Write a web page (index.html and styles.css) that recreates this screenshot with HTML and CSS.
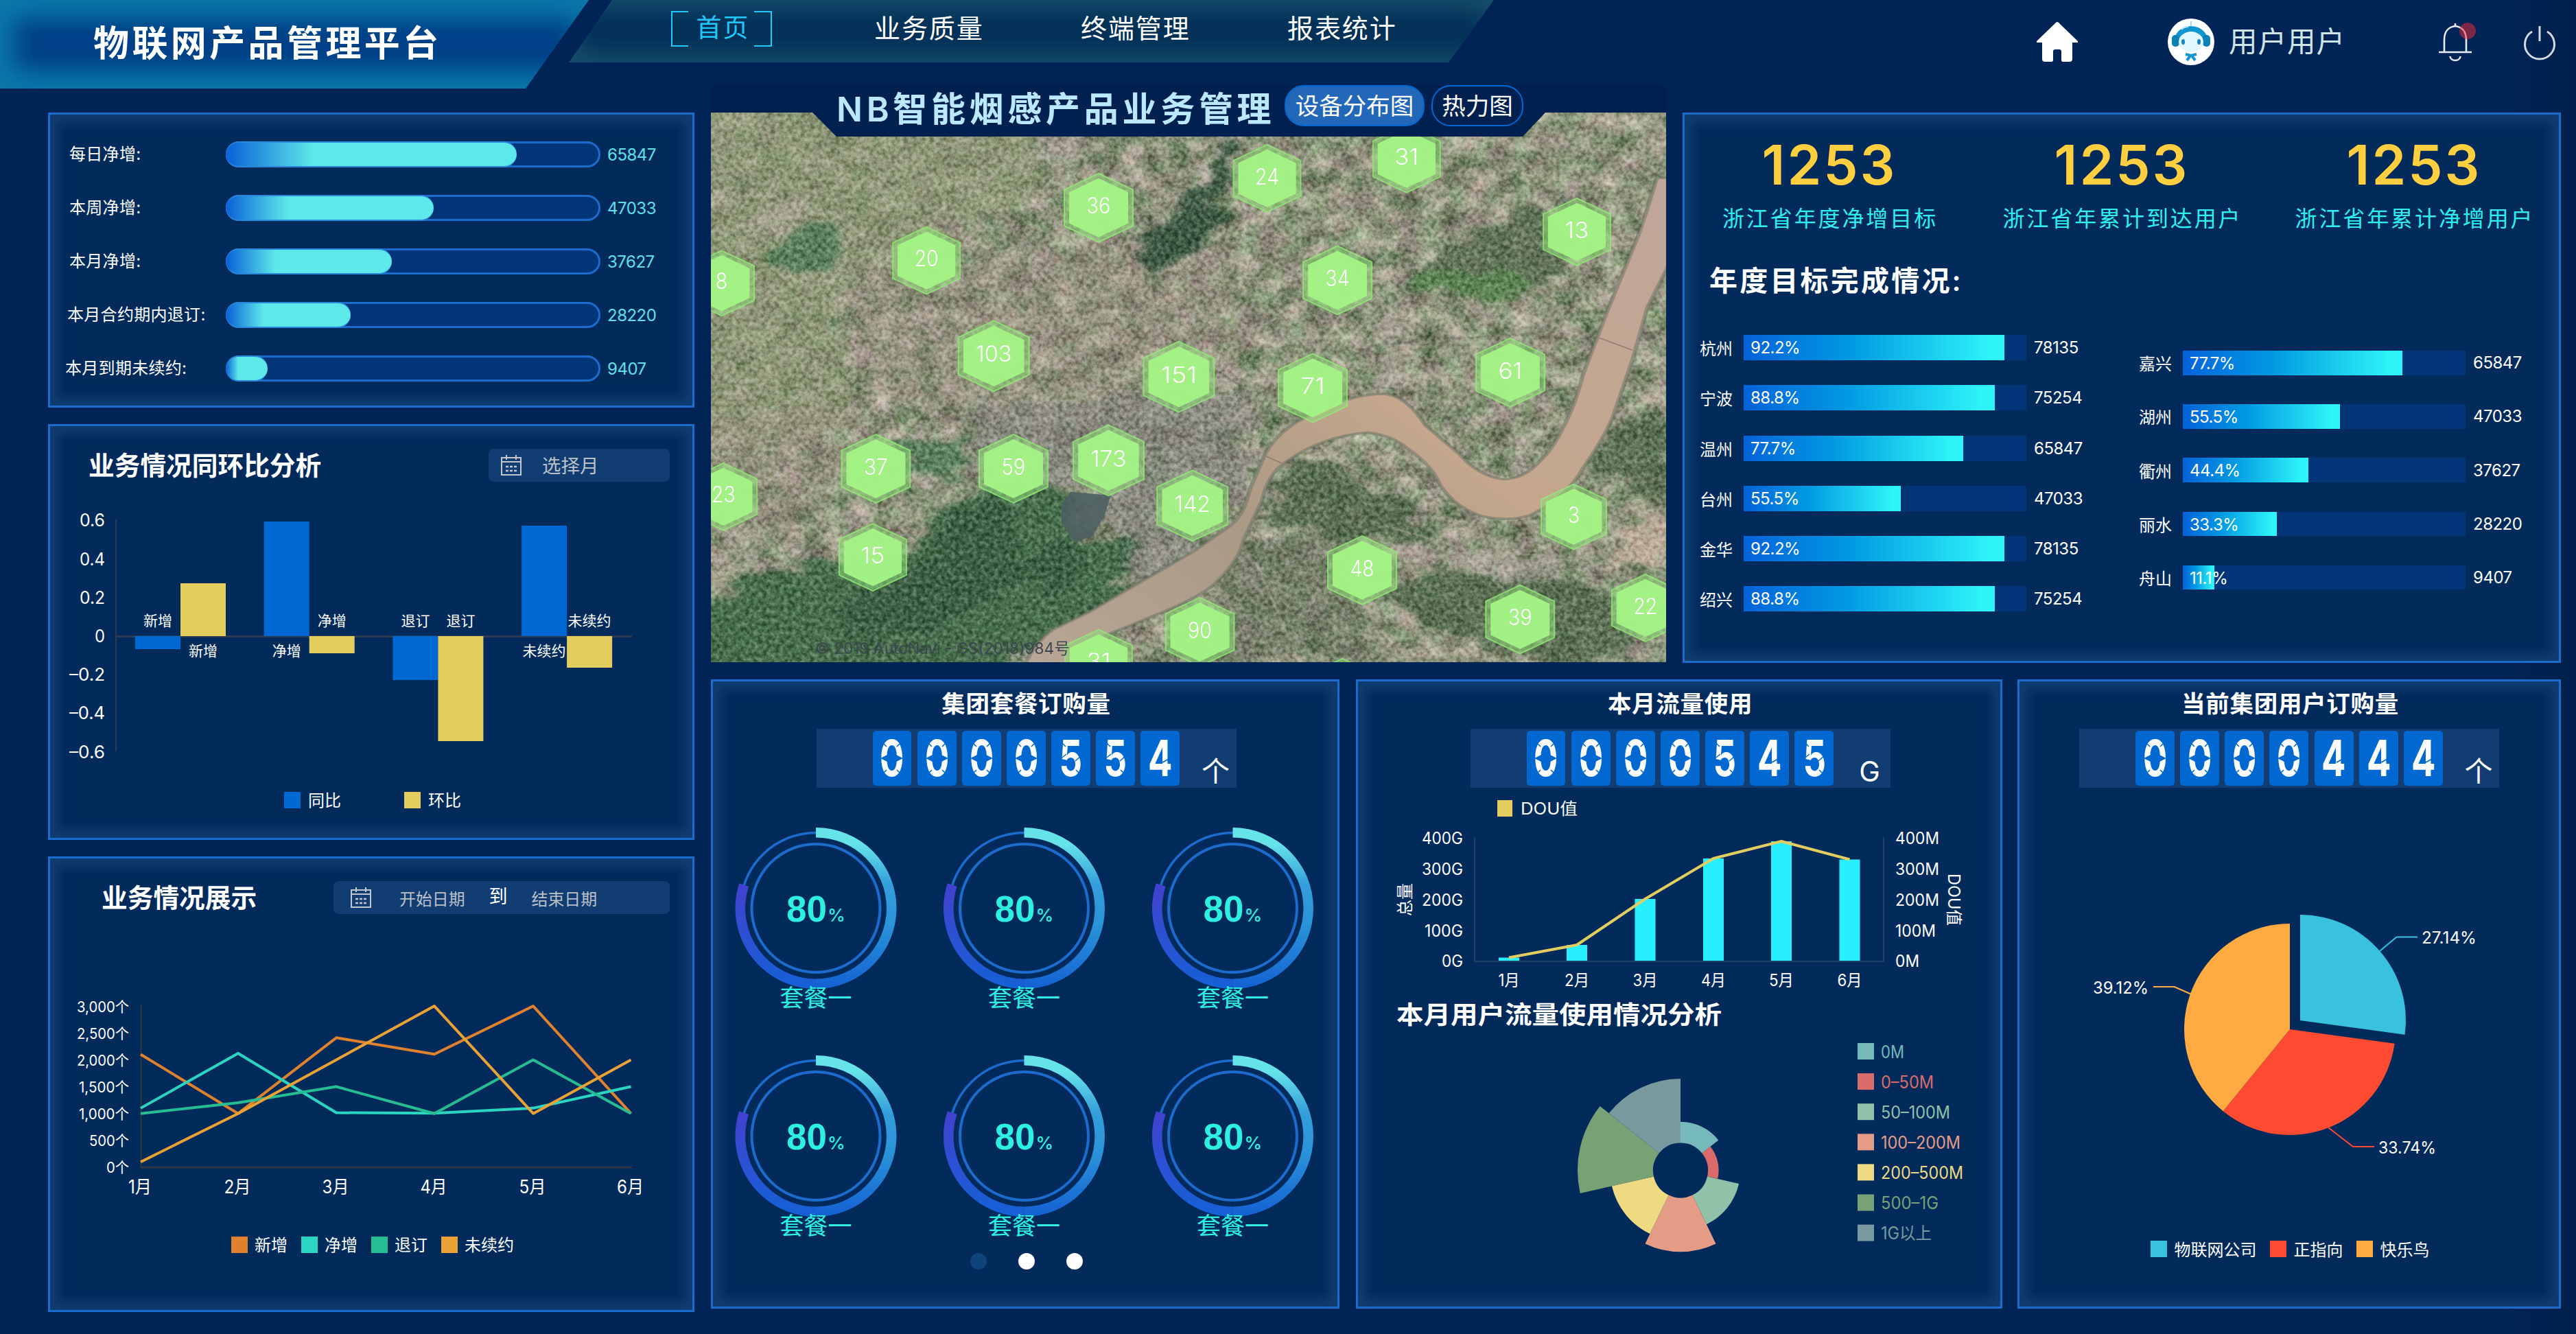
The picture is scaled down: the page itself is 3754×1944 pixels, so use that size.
FILE: index.html
```html
<!DOCTYPE html>
<html lang="zh-CN">
<head>
<meta charset="utf-8">
<title>物联网产品管理平台</title>
<link rel="stylesheet" href="styles.css">
</head>
<body>
<header class="header">
  <div class="brand"><h1>物联网产品管理平台</h1></div>
  <nav class="nav">
    <a class="nav-item active">首页</a>
    <a class="nav-item">业务质量</a>
    <a class="nav-item">终端管理</a>
    <a class="nav-item">报表统计</a>
  </nav>
  <div class="tools">
    <svg class="home" viewBox="0 0 60 58"><path fill="#fff" d="M30 0Q32 0 34 3L60 28V30H52V54Q52 58 48 58H38Q36 58 36 55V43Q36 40 33 40H27Q24 40 24 43V55Q24 58 22 58H12Q8 58 8 54V30H0V28L26 3Q28 0 30 0Z"/></svg>
    <svg class="avatar" viewBox="0 0 68 68">
      <circle cx="34" cy="34" r="34" fill="#fff"/>
      <path d="M34 4V12" stroke="#9fdcf3" stroke-width="2"/>
      <path d="M10 33C10 4 58 4 58 33" fill="#0f96cf"/>
      <rect x="6" y="24" width="11" height="17" rx="5" fill="#0c7fb9"/><rect x="51" y="24" width="11" height="17" rx="5" fill="#0c7fb9"/>
      <ellipse cx="34" cy="34" rx="18" ry="15" fill="#e2f8ff"/>
      <ellipse cx="22.500" cy="34" rx="2.500" ry="4" fill="#1484c0"/><ellipse cx="45.500" cy="34" rx="2.500" ry="4" fill="#1484c0"/>
      <path d="M20 16Q24 12 30 12" stroke="#b6ecff" stroke-width="2" fill="none"/>
      <path d="M26 52L34 54L42 52M33 54L28 61M35 54L40 61" stroke="#1296cc" stroke-width="4" fill="none"/>
    </svg>
    <span class="user">用户用户</span>
    <svg class="bell" viewBox="0 0 56 62">
      <path d="M8 48V30C8 17 15 11 24 10C33 11 40 17 40 30V48M0 48H48M24 6V11M16.500 54C17 62 31 62 31.500 54" fill="none" stroke="#e8edf5" stroke-width="2.600"/>
      <circle cx="42" cy="17" r="12" fill="#f52a33" fill-opacity=".5"/>
    </svg>
    <svg class="power" viewBox="0 0 48 48"><path d="M13 9A21.500 21.500 0 1 0 35 9M24 1V23" fill="none" stroke="#d5dbe6" stroke-width="3"/></svg>
  </div>
</header>

<main class="board">
  <div class="side">
    <section class="panel progress" id="progress"></section>
    <section class="panel">
      <div class="head"><h2>业务情况同环比分析</h2>
        <div class="picker month"><svg class="cal"><use href="#calendar"/></svg><span>选择月</span></div></div>
      <svg class="chart" id="compare" viewBox="73 720 936 501"></svg>
    </section>
    <section class="panel">
      <div class="head trend"><h2>业务情况展示</h2>
        <div class="picker range"><svg class="cal"><use href="#calendar"/></svg><span>开始日期</span><b>到</b><span>结束日期</span></div></div>
      <svg class="chart" id="trend" viewBox="73 1350 936 559"></svg>
    </section>
  </div>

  <div class="centre">
    <div class="row top">
      <section class="map">
        <svg class="terrain" viewBox="0 0 1392 801">
          <defs>
            <filter id="ground" x="0" y="0" width="100%" height="100%" color-interpolation-filters="sRGB">
              <feTurbulence type="fractalNoise" baseFrequency=".03 .035" numOctaves="7" seed="8"/>
              <feColorMatrix values=".5 .25 0 0 .185  .46 .02 0 0 .34  .46 .18 .04 0 .15  0 0 0 0 1"/>
            </filter>
            <filter id="grain" x="0" y="0" width="100%" height="100%" color-interpolation-filters="sRGB">
              <feTurbulence type="fractalNoise" baseFrequency=".16" numOctaves="3" seed="21"/>
              <feColorMatrix values="1.800 .1 0 0 -.45  1.800 0 0 0 -.4  1.800 0 .1 0 -.45  0 0 0 0 1"/>
            </filter>
            <filter id="rough" x="-10%" y="-10%" width="120%" height="120%" color-interpolation-filters="sRGB">
              <feTurbulence type="fractalNoise" baseFrequency=".018" numOctaves="5" seed="4"/>
              <feDisplacementMap in="SourceGraphic" scale="100" xChannelSelector="R" yChannelSelector="G"/>
              <feGaussianBlur stdDeviation="6"/>
            </filter>
            <linearGradient id="water" x1="1" y1="0" x2="0" y2="1">
              <stop offset="0" stop-color="#bfa69a"/><stop offset=".45" stop-color="#c4a78d"/><stop offset=".7" stop-color="#aa9985"/><stop offset="1" stop-color="#b8a796"/>
            </linearGradient>
          </defs>
          <rect width="1392" height="801" filter="url(#ground)"/>
          <svg viewBox="7 8 1548 1532" width="1392" height="801" preserveAspectRatio="none">
            <g filter="url(#rough)">
              <path fill="#909b74" opacity=".55" d="M0 0H540V250L380 330L220 520L230 900L0 960Z"/>
              <path fill="#a09287" opacity=".35" d="M240 450L640 380L860 420L850 780L560 860L240 800ZM0 850L230 830V1020L0 1280Z"/>
              <path fill="#84827f" opacity=".55" d="M430 820L880 800L870 1080L700 1360L640 1060L430 1000Z"/>
              <path fill="#406a48" opacity=".9" d="M380 1110L450 1060L560 1030L600 1190L700 1190L660 1390L560 1460L470 1560H-20V1370L180 1250L340 1230Z"/>
              <path fill="#2c4d38" opacity=".4" d="M400 1120L480 1090L520 1300L400 1420L260 1500L200 1400L360 1260ZM560 1200L620 1230L580 1380L500 1300Z"/>
              <path fill="#4d7a57" opacity=".8" d="M310 920L420 910V1010L320 1030ZM120 340L200 300L220 380L170 450L110 410Z"/>
              <path fill="#2f5039" opacity=".85" d="M845 60L850 220L800 400L715 450L695 380L780 250Z"/>
              <path fill="#536a4e" opacity=".75" d="M1210 380L1350 250L1400 430L1340 500L1140 520L1150 450Z"/>
              <path fill="#5a8a50" opacity=".7" d="M1150 450H1320V520H1160Z"/>
              <path fill="#4c6648" opacity=".75" d="M910 1080L980 960L1130 1100L1180 1190L1050 1200L930 1160ZM1480 850H1560V1080L1430 1020ZM1120 1300L1360 1270L1460 1360L1500 1540H1360L1200 1470L1110 1380Z"/>
              <path fill="#5d6b55" opacity=".5" d="M880 1200L1000 1170L1100 1540H700L850 1340Z"/>
              <path fill="#bcaea8" opacity=".5" d="M1120 1210L1400 1250L1390 1310L1130 1270ZM1080 550L1130 540L1120 780L1100 760ZM540 90L600 70L610 140L550 150ZM40 1210L110 1220L90 1290L40 1280ZM60 300L190 240L130 330L70 350Z"/>
              <path fill="#c5b19e" opacity=".8" d="M1560 1120L1480 1180L1470 1240L1560 1270Z"/>
            </g>
            <path fill="none" stroke="#777b6c" stroke-width="5" opacity=".5" d="M1070 660L1190 640L1350 625L1430 650M830 730L890 800L880 960M550 80V210M1000 30L880 400L1060 560M1060 770L1200 790L1280 970"/>
            <path fill="none" stroke="#b5aba0" stroke-width="5" opacity=".4" d="M340 320L470 180M0 950L200 900L240 800M880 620L1080 440M1100 1160L1240 1230L1430 1250M890 1260L960 1540M640 780L860 800L820 900"/>
          </svg>
          <rect width="1392" height="801" filter="url(#grain)" class="grain"/>
          <svg viewBox="7 8 1548 1532" width="1392" height="801" preserveAspectRatio="none">
            <path fill="#4c5f60" opacity=".9" d="M575 1100L590 1065L655 1075L645 1130L625 1190L595 1205L575 1150Z"/>
            <path fill="url(#water)" stroke="#6f7468" stroke-width="7" stroke-opacity=".55" d="M1575 190H1540Q1528 260 1510 350L1460 560L1420 740Q1408 820 1390 880Q1370 950 1350 980Q1325 1030 1290 1030Q1250 1020 1220 960L1165 880Q1135 800 1100 792Q1050 792 1000 835Q930 880 905 960Q895 1000 880 1060Q870 1140 840 1170L790 1230L700 1320L620 1400L560 1450Q530 1490 515 1550H590L640 1470L740 1400Q810 1350 830 1310Q865 1250 870 1200L900 1090Q910 1010 945 975Q1000 910 1070 900Q1110 905 1140 950Q1175 990 1190 1050Q1215 1110 1255 1132Q1300 1150 1335 1130Q1395 1080 1420 1000Q1460 900 1470 850L1500 700L1525 550L1575 380Z"/>
            <path fill="none" stroke="#8f8170" stroke-width="3" d="M1445 635L1500 670M905 965L945 995"/>
          </svg>
        </svg>
        <svg class="markers" id="markers" viewBox="1036 164 1392 801"></svg>
        <div class="map-bar">
          <h2>NB智能烟感产品业务管理</h2>
          <button class="pill on">设备分布图</button>
          <button class="pill">热力图</button>
        </div>
      </section>

      <section class="panel target">
        <div class="totals">
          <div><strong>1253</strong><span>浙江省年度净增目标</span></div>
          <div><strong>1253</strong><span>浙江省年累计到达用户</span></div>
          <div><strong>1253</strong><span>浙江省年累计净增用户</span></div>
        </div>
        <h3>年度目标完成情况:</h3>
        <div class="cities"><div class="city-col" id="cityA"></div><div class="city-col b" id="cityB"></div></div>
      </section>
    </div>

    <div class="row bottom">
      <section class="panel stat">
        <h2>集团套餐订购量</h2>
        <div class="counter" data-value="0000554" data-unit="个"></div>
        <svg class="chart" id="rings" viewBox="1039 1148 910 756"></svg>
      </section>
      <section class="panel stat">
        <h2>本月流量使用</h2>
        <div class="counter" data-value="0000545" data-unit="G"></div>
        <svg class="chart" id="flow" viewBox="1979 1148 936 756"></svg>
      </section>
      <section class="panel stat">
        <h2>当前集团用户订购量</h2>
        <div class="counter" data-value="0000444" data-unit="个"></div>
        <svg class="chart" id="pie" viewBox="2943 1148 786 756"></svg>
      </section>
    </div>
  </div>
</main>

<svg width="0" height="0" class="defs">
  <symbol id="calendar" viewBox="0 0 30 30"><path d="M1 4H29V29H1ZM1 10H29M8 0V7M22 0V7" fill="none" stroke="#c3c7cd" stroke-width="2"/><path d="M7 17H11M13 17H17M19 17H23M7 23H11M13 23H17M19 23H23" stroke="#c3c7cd" stroke-width="2.500"/></symbol>
</svg>
<script src="app.js"></script>
</body>
</html>
```
FILE: styles.css
```css
* { box-sizing: border-box; }
body {
  margin: 0; width: 3754px; height: 1944px; overflow: hidden; color: #fff;
  background: linear-gradient(90deg, #002456 0, #002456 3650px, #00204a 3754px);
  font-family: Inter, "Noto Sans CJK SC", sans-serif; font-weight: 400;
}
h1, h2, h3 { margin: 0; font-weight: 600; }
svg { display: block; overflow: visible; }
.defs { position: absolute; }

.header { height: 164px; display: flex; align-items: flex-start; }
.brand {
  width: 858px; height: 129px; display: flex; align-items: center; padding: 0 0 10px 136px;
  background: linear-gradient(#005896, #004188 35%, #004188 65%, #005896);
  box-shadow: inset 0 0 36px 20px #0b79aa;
  clip-path: polygon(0 0, 100% 0, 766px 100%, 0 100%);
}
.brand h1 { font-size: 52px; letter-spacing: 4.400px; white-space: nowrap; }
.nav {
  width: 1348px; height: 91px; margin-left: -29px; padding: 16px 0 0 149px;
  display: flex; align-items: flex-start;
  background: #032f56; box-shadow: inset 0 0 34px 14px #164f6e;
  clip-path: polygon(63px 0, 100% 0, 1282px 100%, 0 100%);
}
.nav-item { width: 156px; height: 52px; margin-right: 145px; font-size: 38px; line-height: 50px; letter-spacing: 1.900px; white-space: nowrap; }
.nav-item.active {
  width: 152px; margin-right: 149px; text-align: center; color: #21c8fb; padding-left: 4px; font-size: 37px;
  background:
    linear-gradient(#21c8fb, #21c8fb) 0 0 / 2px 100%, linear-gradient(#21c8fb, #21c8fb) 100% 0 / 2px 100%,
    linear-gradient(#21c8fb, #21c8fb) 0 0 / 25px 2px, linear-gradient(#21c8fb, #21c8fb) 100% 0 / 26px 2px,
    linear-gradient(#21c8fb, #21c8fb) 0 100% / 25px 2px, linear-gradient(#21c8fb, #21c8fb) 100% 100% / 26px 2px;
  background-repeat: no-repeat;
}
.tools { margin-left: auto; height: 122px; padding-right: 29px; display: flex; align-items: center; }
.home { width: 60px; height: 58px; margin-right: 131px; }
.avatar { width: 68px; height: 68px; }
.user { width: 168px; margin: 0 138px 0 21px; font-size: 41.500px; letter-spacing: 1px; line-height: 60px; color: #cfe5e6; white-space: nowrap; }
.bell { width: 56px; height: 62px; margin-right: 67px; margin-top: -4px; }
.power { width: 48px; height: 48px; }

.board { display: flex; gap: 24px; padding-left: 70px; }
.side { width: 942px; display: grid; grid-template-rows: 430px 606px 664px; gap: 24px; }
.centre { width: 2696px; display: grid; grid-template-rows: 802px 917px; gap: 24px; }
.row { display: grid; }
.top { grid-template-columns: 1392px 1280px; gap: 24px; }
.bottom { grid-template-columns: 940px 964px 792px; }
.panel {
  min-width: 0; border: 3px solid #1b6ccc; background: #022b5c;
  box-shadow: inset 0 0 14px 12px #103c70; display: flex; flex-direction: column;
}
.chart { width: 100%; flex: 1; min-height: 0; }

.progress { padding: 39px 0 0 24px; gap: 40px; }
.bar-row { display: flex; align-items: center; height: 38px; font-size: 24px; }
.bar-row label { width: 232px; white-space: nowrap; line-height: 36px; letter-spacing: .3px; }
.bar-row .track { width: 546px; height: 38px; border: 3px solid #1b6ccc; border-radius: 19px; background: #013577; position: relative; }
.bar-row .fill { height: 38px; margin: -3px; border-radius: 19px; background: linear-gradient(90deg, #0e69d8 2%, #5de8ea 30%); border: 2px solid #2a86d8; border-left: 0; border-right: 0; }
.bar-row output { margin-left: 10px; color: #5fe0e6; letter-spacing: -.500px; }

.head { height: 99px; padding: 33px 33px 0 56px; display: flex; justify-content: space-between; align-items: flex-start; }
.head h2 { font-size: 37.700px; line-height: 49px; }
.head.trend { padding-left: 75px; }
.picker { height: 48px; border-radius: 8px; background: #113d73; display: flex; align-items: center; color: #bcc1c9; white-space: nowrap; }
.cal { width: 30px; height: 30px; }
.month { width: 264px; padding-left: 18px; gap: 30px; font-size: 27.500px; }
.month span { margin-top: -2px; }
.range { width: 490px; padding-left: 25px; font-size: 23.900px; }
.range .cal { margin-right: 41px; }
.range b { margin: -8px 35px 0; font-size: 27px; font-weight: 400; color: #fff; }

.map { position: relative; overflow: visible; }
.terrain { width: 1392px; height: 801px; overflow: hidden; }
.grain { mix-blend-mode: soft-light; opacity: .6; }
.markers { position: absolute; left: 0; top: 0; width: 1392px; height: 801px; overflow: hidden; }
.map-bar {
  position: absolute; left: 0; top: -40px; width: 1392px; height: 75px; background: #00214f;
  clip-path: polygon(0 0, 100% 0, 100% 40px, 1216px 40px, 1183px 100%, 183px 100%, 148px 40px, 0 40px);
  display: flex; align-items: flex-start; padding-left: 183px;
}
.map-bar h2 { width: 653px; font-size: 50px; line-height: 71px; letter-spacing: 5.700px; color: #b9e8ff; white-space: nowrap; }
.pill {
  width: 134px; height: 60px; margin-right: 10px; padding: 0; border: 2px solid #0068d3; border-radius: 28px;
  background: none; color: #fff; font: 400 34.500px/58px Inter, "Noto Sans CJK SC", sans-serif; white-space: nowrap;
}
.pill.on { width: 204px; background: #2367b8; }

.totals { display: grid; grid-template-columns: 426px 426px 426px; text-align: center; padding-top: 28px; margin-left: -2px; }
.totals div { min-width: 0; }
.totals strong { display: block; font-size: 80px; line-height: 90px; font-weight: 600; color: #ffcf3f; letter-spacing: 3px; }
.totals span { display: block; margin: 9px 0 0 2px; font-size: 32px; line-height: 50px; letter-spacing: 2.900px; color: #2ff0ee; white-space: nowrap; }
.target h3 { padding: 37px 0 0 36px; font-size: 41px; line-height: 56px; letter-spacing: 3.200px; }
.cities { display: flex; font-size: 24px; }
.city-col { flex: none; width: 640px; padding: 51px 0 0 22px; display: flex; flex-direction: column; gap: 36.300px; }
.city-col.b { width: 600px; padding-top: 74px; gap: 42.700px; }
.city { display: flex; align-items: center; height: 37px; letter-spacing: -.500px; }
.city-col.b .city { height: 35.500px; }
.city label { width: 64px; white-space: nowrap; letter-spacing: 0; }
.city .track { width: 412px; height: 100%; background: #013577; }
.city .fill { height: 100%; padding-left: 10px; white-space: nowrap; line-height: 37px; background: linear-gradient(90deg, #0562d9, #0098e2 40%, #2ef4f8 95%); }
.city output { margin-left: 11px; }

.bottom .panel:nth-child(1) { margin-right: 24px; }
.bottom .panel:nth-child(2) { margin-right: 22px; }
.stat { align-items: center; }
.stat h2 { height: 69px; padding: 7px 0 0 3px; font-size: 34.500px; line-height: 52px; letter-spacing: .7px; }
.counter { width: 612px; height: 86px; margin-left: 3px; padding-left: 82px; background: #113d73; display: flex; align-items: center; gap: 8.200px; }
.stat:nth-child(3) .counter { margin-left: 0; }
.card { width: 57px; height: 80px; border-radius: 5px; background: #0068d0; display: grid; place-items: center; }
.card span { grid-area: 1/1; font-size: 73px; line-height: 80px; font-weight: 700; color: #fbfbfb; transform: scaleX(.72); }
.card svg { grid-area: 1/1; width: 33px; height: 54px; z-index: 1; }
.counter em { width: 60px; margin-left: 14px; text-align: center; font-style: normal; font-size: 41px; line-height: 50px; padding-top: 38px; }
.stat .chart { width: 100%; }
```
FILE: app.js
```js
const $ = id => document.getElementById(id);
const INK = '#fff';

// Text centred vertically on cy; len fixes the drawn width.
function text(x, cy, s, o = {}) {
  const size = o.size || 24;
  const len = o.len ? ` textLength="${o.len}" lengthAdjust="spacingAndGlyphs"` : '';
  const rot = o.rotate ? ` transform="rotate(${o.rotate} ${x} ${cy})"` : '';
  return `<text x="${x}" y="${cy + size * 0.365}" font-size="${size}" fill="${o.fill || INK}" text-anchor="${o.anchor || 'start'}" font-weight="${o.weight || 400}"${len}${rot}>${s}</text>`;
}
const rect = (x, y, w, h, fill) => `<rect x="${x}" y="${y}" width="${w}" height="${h}" fill="${fill}"/>`;
const line = (pts, stroke, w) => `<polyline points="${pts.map(p => p.join()).join(' ')}" fill="none" stroke="${stroke}" stroke-width="${w}" stroke-linejoin="round"/>`;
function polar(cx, cy, r, deg) {
  const a = (deg - 90) * Math.PI / 180;
  return [(cx + r * Math.cos(a)).toFixed(2), (cy + r * Math.sin(a)).toFixed(2)];
}
function sector(cx, cy, r0, r1, a0, a1, fill) {
  const big = a1 - a0 > 180 ? 1 : 0;
  return `<path fill="${fill}" d="M${polar(cx, cy, r0, a0)}L${polar(cx, cy, r1, a0)}A${r1} ${r1} 0 ${big} 1 ${polar(cx, cy, r1, a1)}L${polar(cx, cy, r0, a1)}A${r0} ${r0} 0 ${big} 0 ${polar(cx, cy, r0, a0)}Z"/>`;
}

// Net growth progress bars
$('progress').innerHTML = [
  ['每日净增:', 77.7, 65847, 4], ['本周净增:', 55.5, 47033, 4], ['本月净增:', 44.4, 37627, 4],
  ['本月合约期内退订:', 33.3, 28220, 1], ['本月到期未续约:', 11.1, 9407, -2]
].map(([n, p, v, dx]) => `<div class="bar-row"><label style="text-indent:${dx}px">${n}</label><div class="track"><div class="fill" style="width:${p * 5.46}px"></div></div><output>${v}</output></div>`).join('');

// Year / month comparison
{
  let s = '';
  [0.6, 0.4, 0.2, 0, -0.2, -0.4, -0.6].forEach((v, i) => {
    s += text(153, 758 + i * 56.2, v < 0 ? '–' + Math.abs(v) : v, { size: 26, anchor: 'end', len: v === 0 ? 15 : v < 0 ? 52 : 37 });
  });
  s += rect(168, 757, 2, 338, '#2d3b50') + rect(168, 926, 753, 3, '#2d3b50');
  [['新增', -19, 77], ['净增', 167, -25], ['退订', -64, -153], ['未续约', 161, -46]].forEach(([n, a, b], i) => {
    const x = 197 + i * 187.700;
    [[a, '#0068d3', x], [b, '#e4cd5f', x + 66]].forEach(([h, c, bx]) => {
      s += rect(bx, h > 0 ? 927 - h : 927, 66, Math.abs(h), c);
      s += text(bx + 33, h > 0 ? 948 : 904, n, { size: 21, anchor: 'middle' });
    });
  });
  s += rect(414, 1154, 24, 24, '#0068d3') + text(449, 1166.500, '同比') + rect(589, 1154, 24, 24, '#e4cd5f') + text(624, 1166.500, '环比');
  $('compare').innerHTML = s;
}

// Monthly trend
{
  let s = '';
  [3000, 2500, 2000, 1500, 1000, 500, 0].forEach((v, i) => {
    s += text(188, 1467 + i * 39, v.toLocaleString('en-US') + '个', { size: 21.500, anchor: 'end', len: v >= 2000 ? 76 : v >= 1000 ? 73 : v ? 58 : 33 });
  });
  s += rect(204.500, 1465, 2, 237, '#33363d') + rect(205, 1700, 716, 2.500, '#33363d');
  const xs = [205, 347, 490, 633, 777, 919.500];
  [['#e0812e', [2100, 1000, 2410, 2105, 3000, 1000]], ['#2ad6c1', [1100, 2120, 1015, 1005, 1100, 1500]],
   ['#25bd92', [1000, 1200, 1500, 1000, 2000, 1000]], ['#eba234', [100, 1000, 2000, 3000, 1000, 2000]]]
    .forEach(([c, d]) => { s += line(d.map((v, i) => [xs[i], 1701 - v * 0.0783]), c, 4); });
  xs.forEach((x, i) => { s += text(x - 1, 1729.500, (i + 1) + '月', { size: 26.500, anchor: 'middle', len: i ? 39 : 34 }); });
  [['#e0812e', '新增', 337], ['#2ad6c1', '净增', 439], ['#25bd92', '退订', 541], ['#eba234', '未续约', 643]]
    .forEach(([c, n, x]) => { s += rect(x, 1802, 24, 24, c) + text(x + 34, 1814.500, n); });
  $('trend').innerHTML = s;
}

// Device clusters on the map
$('markers').innerHTML = [
  [36, 635, 273], [24, 908, 191], [31, 1134, 137], [13, 1410, 340], [20, 356, 420], [8, 24, 483], [34, 1022, 475],
  [103, 465, 686], [151, 765, 744], [71, 982, 775], [61, 1302, 732], [37, 274, 1000], [59, 497, 1000], [173, 651, 977],
  [142, 787, 1103], [23, 27, 1078], [3, 1405, 1134], [15, 269, 1247], [48, 1062, 1283], [90, 799, 1455], [39, 1318, 1420],
  [22, 1521, 1388], [31, 635, 1542], ['', 1030, 1620]
].map(([n, px, py]) => {
  const x = 1030 + px * 0.8993, y = 160 + py * 0.523, k = n > 100 ? 1.03 : n < 10 ? .95 : n < 32 ? .98 : 1;
  const hex = r => [[0, -r], [r, -r * .53], [r, r * .53], [0, r], [-r, r * .53], [-r, -r * .53]].map(p => p.join()).join(' ');
  return `<g transform="translate(${x} ${y})"><g transform="scale(${k})"><polygon points="${hex(50)}" fill="#8fdc78" fill-opacity=".55" stroke="#93e878" stroke-opacity=".8" stroke-width="2"/><polygon points="${hex(43)}" fill="#a4f385" fill-opacity=".97"/></g>${n ? text(0, -3, n, { size: 32, anchor: 'middle', weight: 300, len: String(n).length * 17.500 }) : ''}</g>`;
}).join('') + text(1188, 945, '© 2019 AutoNavi - GS(2018)984号', { size: 23, fill: '#3c4650', len: 371 });

// City completion
const city = ([n, p, v]) => `<div class="city"><label>${n}</label><div class="track"><div class="fill" style="width:${p}%">${p}%</div></div><output>${v}</output></div>`;
$('cityA').innerHTML = [['杭州', 92.2, 78135], ['宁波', 88.8, 75254], ['温州', 77.7, 65847], ['台州', 55.5, 47033], ['金华', 92.2, 78135], ['绍兴', 88.8, 75254]].map(city).join('');
$('cityB').innerHTML = [['嘉兴', 77.7, 65847], ['湖州', 55.5, 47033], ['衢州', 44.4, 37627], ['丽水', 33.3, 28220], ['舟山', 11.1, 9407]].map(city).join('');

// Counters: gaps between the display segments are laid over each digit
const gaps = {
  0: 'M2 3L9 10M31 3L24 10M2 51L9 44M31 51L24 44|M0 27L10 22V32ZM33 27L23 22V32Z',
  4: 'M20 33L33 26|',
  5: 'M1 2L9 10M0 29L10 21M23 31L33 22M32 52L24 44|'
};
document.querySelectorAll('.counter').forEach(el => {
  el.innerHTML = [...el.dataset.value].map(d => {
    const [cut, notch] = gaps[d].split('|');
    return `<div class="card"><span>${d}</span><svg viewBox="0 0 33 54"><path d="${cut}" stroke="#0068d0" stroke-width="1.500"/><path d="${notch}" fill="#0068d0"/></svg></div>`;
  }).join('') + `<em>${el.dataset.unit}</em>`;
});

// Package rings
{
  let s = `<defs><linearGradient id="gr" x2="0" y2="1"><stop offset=".1" stop-color="#66e3e9"/><stop offset=".35" stop-color="#359fdc"/><stop offset=".6" stop-color="#2a93d9"/><stop offset="1" stop-color="#1461d3"/></linearGradient>
  <linearGradient id="gl" x2="0" y2="1"><stop offset="0" stop-color="#4440d0"/><stop offset="1" stop-color="#1461d6"/></linearGradient></defs>`;
  [1323.500, 1655.500].forEach(y => [1189, 1492.500, 1796.500].forEach(x => {
    s += `<circle cx="${x}" cy="${y}" r="110" fill="none" stroke="#1b6ccc" stroke-width="3.500"/><circle cx="${x}" cy="${y}" r="93.500" fill="none" stroke="#1b6ccc" stroke-width="4"/>`;
    s += sector(x, y, 103, 117.500, 180, 288, 'url(#gl)') + sector(x, y, 103, 117.500, 0, 180, 'url(#gr)');
    s += `<text x="${x - 43}" y="${y + 19}" font-family="Liberation Sans, sans-serif" font-size="53" font-weight="700" fill="#2df0e0">80<tspan font-family="Inter, sans-serif" font-size="26" font-weight="500" dx="1">%</tspan></text>`;
    s += text(x, y + 130.500, '套餐一', { size: 35, anchor: 'middle', fill: '#2df0e0' });
  }));
  ['#0e437c', '#fff', '#fff'].forEach((c, i) => { s += `<circle cx="${1426 + i * 70}" cy="1838" r="12" fill="${c}"/>`; });
  $('rings').innerHTML = s;
}

// Traffic chart and rose
{
  let s = rect(2182, 1166, 22, 24, '#e4cd5f') + text(2216, 1178, 'DOU值', { len: 83 });
  [400, 300, 200, 100, 0].forEach((v, i) => {
    const y = 1221.500 + i * 44.800;
    s += text(2132, y, v + 'G', { anchor: 'end', len: v > 100 ? 60 : v ? 56 : 31 });
    s += text(2762, y, v + 'M', { len: v > 100 ? 64 : v ? 59 : 35 });
  });
  s += rect(2148, 1220, 2, 181, '#1f4268') + rect(2744, 1220, 2, 181, '#1f4268') + rect(2148, 1400, 598, 2, '#1f4268');
  const pts = [[2199, 1395.500], [2298, 1377], [2397.500, 1310], [2497, 1251], [2596, 1226], [2695.500, 1252.500]];
  pts.forEach(([x, y], i) => { s += rect(x - 15, y, 30, 1400 - y, '#28efff') + text(x, 1428.500, (i + 1) + '月', { anchor: 'middle', len: i ? 36 : 31 }); });
  s += line(pts, '#e4cd5f', 4);
  s += text(2047, 1311, '总量', { anchor: 'middle', rotate: -90 }) + text(2848, 1311, 'DOU值', { anchor: 'middle', rotate: 90, len: 76 });
  s += text(2035, 1478.500, '本月用户流量使用情况分析', { size: 36, weight: 600, len: 474 });
  [['0M', 70.7, '#76b9bb', 34], ['0–50M', 55.6, '#da6b6a', 77], ['50–100M', 87.3, '#90c1a9', 101], ['100–200M', 118.7, '#e59c87', 116],
   ['200–500M', 102.7, '#eeda80', 120], ['500–1G', 150, '#78a176', 84], ['1G以上', 133.4, '#789a9e', 74]].forEach(([n, r, c, w], i) => {
    s += sector(2449, 1705.500, 40, r, i * 360 / 7, (i + 1) * 360 / 7, c);
    s += rect(2707, 1520 + i * 44.100, 24, 24, c) + text(2741, 1532.500 + i * 44.100, n, { size: 25, fill: c, len: w });
  });
  $('flow').innerHTML = s;
}

// Group subscriptions pie
{
  const C = '#39c2de', R = '#ff4a32', O = '#ffab42';
  let s = sector(3352, 1487, 0, 154, 0, 97.700, C) + sector(3337, 1500, 0, 154, 97.700, 219.200, R) + sector(3337, 1500, 0, 154, 219.200, 360, O);
  s += line([[3468, 1386], [3492.500, 1365.500], [3523, 1365.500]], C, 2) + text(3529, 1366, '27.14%', { len: 80 });
  s += line([[3192.500, 1448.500], [3168.500, 1438], [3138, 1438]], O, 2) + text(3131, 1439, '39.12%', { anchor: 'end', len: 81 });
  s += line([[3393.500, 1643.500], [3429, 1671], [3460, 1671]], R, 2) + text(3466, 1672, '33.74%', { len: 84 });
  [[C, 3134, '物联网公司'], [R, 3308, '正指向'], [O, 3434, '快乐鸟']].forEach(([c, x, n]) => { s += rect(x, 1808, 24, 24, c) + text(x + 34.500, 1821, n); });
  $('pie').innerHTML = s;
}
```
